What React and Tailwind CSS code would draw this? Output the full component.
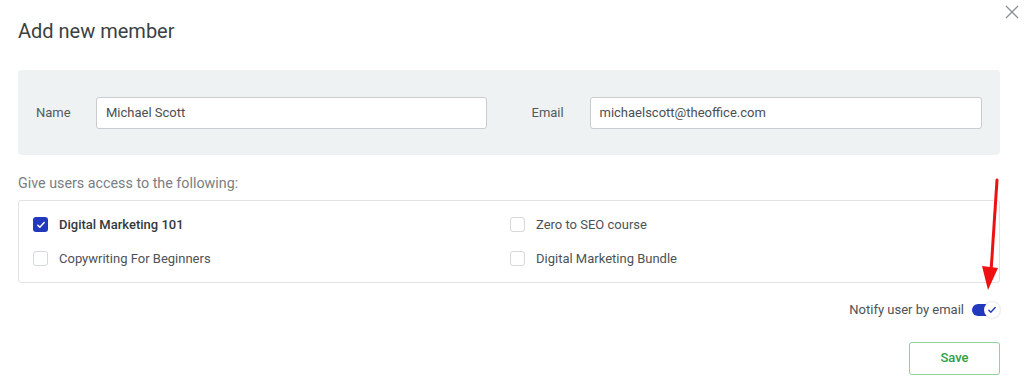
import React from 'react';

const courses = [
  { name: 'Digital Marketing 101', checked: true },
  { name: 'Zero to SEO course', checked: false },
  { name: 'Copywriting For Beginners', checked: false },
  { name: 'Digital Marketing Bundle', checked: false },
];

function Checkbox({ checked }) {
  if (checked) {
    return (
      <span className="flex h-[15px] w-[15px] items-center justify-center rounded-[3px] bg-[#2339bd]">
        <svg width="10" height="10" viewBox="0 0 10 10" fill="none">
          <path d="M1.8 5.2l2 2 4.4-4.6" stroke="white" strokeWidth="1.5" strokeLinecap="round" strokeLinejoin="round" />
        </svg>
      </span>
    );
  }
  return <span className="h-[15px] w-[15px] rounded-[3px] border border-[#d5d8dc] bg-white" />;
}

export default function App() {
  return (
    <div className="relative h-[387px] w-[1024px] bg-white font-['Roboto',sans-serif] text-[#4d5257]">
      <button className="absolute right-[4px] top-[4px] text-[#8a8f94]">
        <svg width="16" height="16" viewBox="0 0 16 16" fill="none">
          <path d="M2 2l12 12M14 2L2 14" stroke="currentColor" strokeWidth="1.3" />
        </svg>
      </button>

      <div className="w-[1000px] pl-[18px] pt-[19px]">
        <h1 className="text-[20px] leading-[24px] text-[#3a3f44]">Add new member</h1>

        <div className="mt-[27px] flex h-[85px] items-center gap-[45px] rounded-[4px] bg-[#eff2f3] px-[18px]">
          <div className="flex flex-1 items-center">
            <label className="w-[60px] text-[13px] text-[#55595e]">Name</label>
            <div className="flex h-[32px] flex-1 items-center rounded-[3px] border border-[#c9ccd0] bg-white px-[9px] text-[13px] text-[#4a4e53]">
              Michael Scott
            </div>
          </div>
          <div className="flex flex-1 items-center">
            <label className="w-[58px] text-[13px] text-[#55595e]">Email</label>
            <div className="flex h-[32px] flex-1 items-center rounded-[3px] border border-[#c9ccd0] bg-white px-[9px] text-[13px] text-[#4a4e53]">
              michaelscott@theoffice.com
            </div>
          </div>
        </div>

        <p className="mt-[18px] text-[14.3px] leading-[20px] text-[#7a7e82]">Give users access to the following:</p>

        <div className="mt-[7px] grid h-[83px] grid-cols-2 content-center gap-y-[18px] rounded-[3px] border border-[#e1e3e6] pl-[14px] pr-[12px]">
          {courses.map((c) => (
            <div key={c.name} className="flex items-center gap-[11px] text-[13px] leading-[16px]">
              <Checkbox checked={c.checked} />
              <span className={c.checked ? 'font-medium text-[#33383c]' : 'text-[#4d5257]'}>{c.name}</span>
            </div>
          ))}
        </div>

        <div className="mt-[17px] flex items-center justify-end gap-[8px]">
          <span className="text-[13px] text-[#4d5257]">Notify user by email</span>
          <span className="relative flex h-[16px] w-[28px] items-center">
            <span className="h-[12px] w-[24px] rounded-full bg-[#2339bd]" />
            <span className="absolute right-0 flex h-[16px] w-[16px] items-center justify-center rounded-full bg-white shadow-[0_0_2px_rgba(0,0,0,0.25)]">
              <svg width="10" height="10" viewBox="0 0 10 10" fill="none">
                <path d="M1.8 5.2l2 2 4.4-4.6" stroke="#2339bd" strokeWidth="1.4" strokeLinecap="round" strokeLinejoin="round" />
              </svg>
            </span>
          </span>
        </div>

        <div className="mt-[22px] flex justify-end">
          <button className="h-[33px] w-[91px] rounded-[3px] border border-[#8fd19a] text-[13px] font-medium text-[#2f9e44]">
            Save
          </button>
        </div>
      </div>

      <svg className="pointer-events-none absolute left-[977px] top-[176px]" width="30" height="118" viewBox="0 0 30 118" fill="none">
        <path d="M20 4L14 96" stroke="#ee1111" strokeWidth="3" strokeLinecap="round" />
        <path d="M5 90L21 92L11 114Z" fill="#ee1111" />
      </svg>
    </div>
  );
}
